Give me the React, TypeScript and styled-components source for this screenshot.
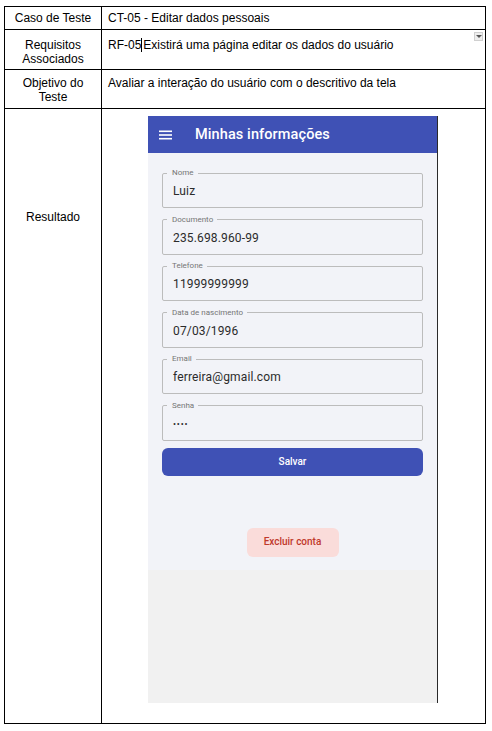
import React from "react";
import styled, { createGlobalStyle } from "styled-components";

const GlobalStyle = createGlobalStyle`
  html, body { margin: 0; padding: 0; background: #ffffff; }
  body { font-family: "Liberation Sans", Arial, sans-serif; }
  * { box-sizing: border-box; }
`;

const Page = styled.div`
  padding: 6px 0 0 4px;
`;

const Table = styled.div`
  display: grid;
  grid-template-columns: 97px 384px;
  grid-template-rows: 23px 40px 39px 615px;
  width: 482px;
  border-top: 1px solid #000;
  border-left: 1px solid #000;
  font-size: 12px;
  line-height: 14px;
  color: #000;
`;

const Cell = styled.div<{ $head?: boolean; $pt?: number }>`
  position: relative;
  border-right: 1px solid #000;
  border-bottom: 1px solid #000;
  padding: ${(p) => p.$pt ?? 0}px ${(p) => (p.$head ? "4px" : "6px")} 0;
  text-align: ${(p) => (p.$head ? "center" : "left")};
`;

const Caret = styled.span`
  display: inline-block;
  width: 1px;
  height: 14px;
  background: #000;
  vertical-align: -3px;
  margin: 0 1px 0 0;
`;

const DropToggle = styled.div`
  position: absolute;
  top: 2px;
  right: 2px;
  width: 9px;
  height: 9px;
  background: #eeeeee;
  border: 1px solid #d0d0d0;
  display: flex;
  align-items: center;
  justify-content: center;
  &::after {
    content: "";
    border-left: 3px solid transparent;
    border-right: 3px solid transparent;
    border-top: 3px solid #555;
  }
`;

const ResultCell = styled.div`
  border-right: 1px solid #000;
  border-bottom: 1px solid #000;
  padding: 7px 0 0 46px;
`;

const Phone = styled.div`
  width: 290px;
  height: 587px;
  display: flex;
  flex-direction: column;
  border-right: 1px solid #2a2a2a;
  font-family: Roboto, "Noto Sans", sans-serif;
`;

const AppBar = styled.div`
  height: 37px;
  flex: none;
  background: #3f51b5;
  display: flex;
  align-items: center;
  padding-left: 11px;
  gap: 23px;
  color: #fff;
`;

const Title = styled.div`
  font-size: 14.5px;
  font-weight: 500;
  letter-spacing: 0.1px;
`;

const Content = styled.div`
  height: 417px;
  flex: none;
  background: #f2f3f8;
  padding: 16px 14px 0 14px;
  display: flex;
  flex-direction: column;
`;

const Fields = styled.div`
  display: flex;
  flex-direction: column;
  gap: 7.5px;
`;

const Field = styled.fieldset`
  margin: 0;
  padding: 0 10px;
  border: 1px solid #bcbcbc;
  border-radius: 2px;
  min-width: 0;
`;

const Legend = styled.legend`
  font-size: 8px;
  line-height: 8px;
  color: #757575;
  padding: 0 4px 0 5px;
  margin-left: -6px;
`;

const Value = styled.div<{ $secret?: boolean }>`
  height: 30px;
  padding-bottom: 2px;
  line-height: 28px;
  font-size: ${(p) => (p.$secret ? "9px" : "12px")};
  color: #2b2b2b;
  letter-spacing: ${(p) => (p.$secret ? "0.8px" : "0.15px")};
`;

const PrimaryButton = styled.div`
  margin-top: 7px;
  height: 28px;
  border-radius: 6px;
  background: #3f51b5;
  color: #fff;
  font-size: 10px;
  font-weight: 500;
  display: flex;
  align-items: center;
  justify-content: center;
`;

const DangerButton = styled.div`
  margin: 52px auto 0;
  width: 92px;
  height: 29px;
  border-radius: 6px;
  background: #fadcda;
  color: #c0392b;
  font-size: 10px;
  font-weight: 500;
  display: flex;
  align-items: center;
  justify-content: center;
`;

const Filler = styled.div`
  flex: 1;
  background: #f1f1f1;
`;

const Menu = () => (
  <svg width="13" height="10" viewBox="0 0 13 10">
    <rect x="0" y="0.5" width="13" height="1.6" fill="#fff" />
    <rect x="0" y="4.2" width="13" height="1.6" fill="#fff" />
    <rect x="0" y="7.9" width="13" height="1.6" fill="#fff" />
  </svg>
);

const fields: { label: string; value: string; secret?: boolean }[] = [
  { label: "Nome", value: "Luiz" },
  { label: "Documento", value: "235.698.960-99" },
  { label: "Telefone", value: "11999999999" },
  { label: "Data de nascimento", value: "07/03/1996" },
  { label: "Email", value: "ferreira@gmail.com" },
  { label: "Senha", value: "••••", secret: true },
];

export default function App() {
  return (
    <>
      <GlobalStyle />
      <Page>
        <Table>
          <Cell $head $pt={4}>Caso de Teste</Cell>
          <Cell $pt={4}>CT-05 - Editar dados pessoais</Cell>
          <Cell $head $pt={8}>Requisitos<br />Associados</Cell>
          <Cell $pt={8}>
            RF-05<Caret />Existirá uma página editar os dados do usuário
            <DropToggle />
          </Cell>
          <Cell $head $pt={6}>Objetivo do<br />Teste</Cell>
          <Cell $pt={6}>Avaliar a interação do usuário com o descritivo da tela</Cell>
          <Cell $head $pt={101}>Resultado</Cell>
          <ResultCell>
            <Phone>
              <AppBar>
                <Menu />
                <Title>Minhas informações</Title>
              </AppBar>
              <Content>
                <Fields>
                  {fields.map((f) => (
                    <Field key={f.label}>
                      <Legend>{f.label}</Legend>
                      <Value $secret={f.secret}>{f.value}</Value>
                    </Field>
                  ))}
                </Fields>
                <PrimaryButton>Salvar</PrimaryButton>
                <DangerButton>Excluir conta</DangerButton>
              </Content>
              <Filler />
            </Phone>
          </ResultCell>
        </Table>
      </Page>
    </>
  );
}
